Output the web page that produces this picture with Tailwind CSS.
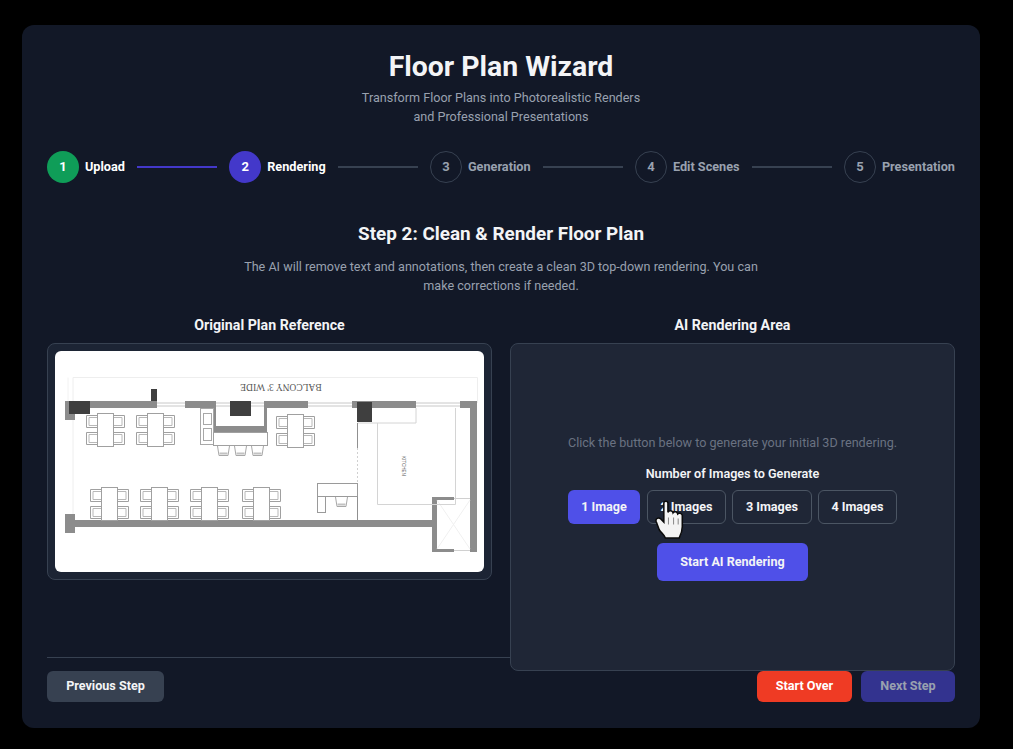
<!DOCTYPE html>
<html lang="en">

<head>
    <meta charset="UTF-8">
    <meta name="viewport" content="width=device-width, initial-scale=1.0">
    <title>Floor Plan Wizard</title>
    <script src="https://cdn.jsdelivr.net/npm/@tailwindcss/browser@4"></script>
</head>

<body class="bg-black font-['Roboto',sans-serif]">
    <div class="h-[749px] w-[1013px] pt-[25px] pl-[22px]">
        <div class="h-[703px] w-[958px] rounded-xl bg-[#121827] px-[25px] pt-6">

            <!-- header -->
            <div class="text-center">
                <h1 class="text-[28.4px] leading-9 font-bold text-gray-100">Floor Plan Wizard</h1>
                <p class="mt-[3px] text-[12.6px] leading-[19px] text-gray-400">Transform Floor Plans into Photorealistic Renders<br>and Professional Presentations</p>
            </div>

            <!-- stepper -->
            <div class="mt-[25px] flex items-center justify-between">
                <div class="flex items-center gap-[6px]">
                    <div class="flex h-8 w-8 items-center justify-center rounded-full bg-[#0f9d58] text-[13px] font-bold text-white">1</div>
                    <span class="text-[12.7px] font-bold text-white">Upload</span>
                </div>
                <div class="h-[2px] w-20 bg-[#4338ca]"></div>
                <div class="flex items-center gap-[6px]">
                    <div class="flex h-8 w-8 items-center justify-center rounded-full bg-[#4338ca] text-[13px] font-bold text-white">2</div>
                    <span class="text-[12.7px] font-bold text-white">Rendering</span>
                </div>
                <div class="h-[2px] w-20 bg-[#374151]"></div>
                <div class="flex items-center gap-[6px]">
                    <div class="flex h-8 w-8 items-center justify-center rounded-full border border-[#374151] text-[13px] font-bold text-gray-400">3</div>
                    <span class="text-[12.7px] font-bold text-gray-400">Generation</span>
                </div>
                <div class="h-[2px] w-20 bg-[#374151]"></div>
                <div class="flex items-center gap-[6px]">
                    <div class="flex h-8 w-8 items-center justify-center rounded-full border border-[#374151] text-[13px] font-bold text-gray-400">4</div>
                    <span class="text-[12.7px] font-bold text-gray-400">Edit Scenes</span>
                </div>
                <div class="h-[2px] w-20 bg-[#374151]"></div>
                <div class="flex items-center gap-[6px]">
                    <div class="flex h-8 w-8 items-center justify-center rounded-full border border-[#374151] text-[13px] font-bold text-gray-400">5</div>
                    <span class="text-[12.7px] font-bold text-gray-400">Presentation</span>
                </div>
            </div>

            <!-- step heading -->
            <div class="mt-[37px] text-center">
                <h2 class="text-[18.9px] leading-7 font-bold text-gray-100">Step 2: Clean &amp; Render Floor Plan</h2>
                <p class="mx-auto mt-[9px] w-[530px] text-[12.6px] leading-[19px] text-gray-400">The AI will remove text and annotations, then create a clean 3D top-down rendering. You can make corrections if needed.</p>
            </div>

            <!-- panels -->
            <div class="mt-5 grid h-[342px] grid-cols-2 gap-[18px]">
                <div>
                    <h3 class="mb-2 text-center text-[14.2px] leading-5 font-bold text-gray-100">Original Plan Reference</h3>
                    <div class="rounded-lg border border-[#374151] bg-[#1c2434] p-[7px]">
                        <svg class="block h-[221px] w-[429px] rounded-md bg-white" viewBox="0 0 429 221" fill="none">
                            <defs>
                                <g id="chair" stroke="#a0a0a0" stroke-width="1">
                                    <path d="M11 .5H.5v12H11" />
                                    <path d="M11 2.5H3v8h8" stroke="#b8b8b8" />
                                </g>
                                <g id="set">
                                    <use href="#chair" transform="translate(-11 2)" />
                                    <use href="#chair" transform="translate(-11 19)" />
                                    <use href="#chair" transform="translate(28 2) scale(-1 1)" />
                                    <use href="#chair" transform="translate(28 19) scale(-1 1)" />
                                    <rect x=".5" y=".5" width="16" height="33" fill="#fff" stroke="#a0a0a0" />
                                </g>
                                <g id="stool" stroke="#a8a8a8">
                                    <path d="M.5 0l1.5 9.5h9L12.5 0" />
                                    <path d="M2.5 7.5h8" stroke="#c2c2c2" stroke-width="2" />
                                </g>
                            </defs>

                            <!-- balcony outline -->
                            <path d="M18 163V26.5H422.5V52" stroke="#eeeeee" />
                            <path d="M13 26.5V50" stroke="#f2f2f2" />
                            <text x="226" y="39" transform="rotate(180 226 36)" text-anchor="middle" font-family="'Liberation Serif',serif" font-size="9.5" fill="#555">BALCONY 3' WIDE</text>

                            <!-- windows -->
                            <path d="M102 52h28M102 55h28M161 52h14M161 55h14M196 52h13M196 55h13M253 52h44M253 55h44M361 52h44M361 55h44" stroke="#c8c8c8" />

                            <!-- walls -->
                            <path d="M10 50h92v7H20v12H10zM130 50h31v25h48V50h44v7h-41v24h-54V57h-28zM297 50h64v7h-64zM405 50h17v151h-7V57h-10zM10 163h10v6h357V146h22v3h-17v49h17v3h-22v-25H20v6H10z" fill="#8c8c8c" />
                            <path d="M399 147.5h16M399 199.5h16" stroke="#d0d0d0" />
                            <path d="M382 149L415 198M415 149L382 198" stroke="#f0f0f0" />

                            <!-- dark columns -->
                            <rect x="96" y="38" width="6" height="12" fill="#3f3f3f" />
                            <rect x="14" y="50" width="21" height="13" fill="#3f3f3f" />
                            <rect x="175" y="50" width="21" height="15" fill="#3f3f3f" />
                            <rect x="302" y="51" width="15" height="20" fill="#3f3f3f" />

                            <!-- upper tables -->
                            <use href="#set" x="42" y="62" />
                            <use href="#set" x="92" y="62" />
                            <use href="#set" x="232" y="63" />

                            <!-- bar counter -->
                            <rect x="145.5" y="57.5" width="13" height="36" stroke="#a8a8a8" />
                            <rect x="148.5" y="62.5" width="8" height="11" stroke="#a8a8a8" />
                            <rect x="148.5" y="77.5" width="8" height="12" stroke="#a8a8a8" />
                            <rect x="158.5" y="81.5" width="54" height="13" fill="#fff" stroke="#a0a0a0" />
                            <use href="#stool" x="162" y="95" />
                            <use href="#stool" x="179" y="95" />
                            <use href="#stool" x="196" y="95" />

                            <!-- kitchen -->
                            <path d="M302.5 72H361V57M322.5 72V153.5H400.5V57" stroke="#d4d4d4" />
                            <path d="M302.5 72V97" stroke="#909090" />
                            <path d="M302.5 97V132" stroke="#d0d0d0" stroke-dasharray="2 2" />
                            <text x="348" y="115" transform="rotate(90 348 115)" text-anchor="middle" dominant-baseline="middle" font-family="'Liberation Sans',sans-serif" font-size="4.5" fill="#555">KITCHEN</text>

                            <!-- lower tables -->
                            <use href="#set" x="46" y="136" />
                            <use href="#set" x="96" y="136" />
                            <use href="#set" x="146" y="136" />
                            <use href="#set" x="198" y="136" />

                            <!-- desk -->
                            <rect x="262.5" y="132.5" width="40" height="13" stroke="#9a9a9a" />
                            <rect x="262.5" y="145.5" width="8" height="16" stroke="#9a9a9a" />
                            <path d="M302.5 145.5V169" stroke="#909090" />
                            <use href="#stool" x="280" y="146" />
                        </svg>
                    </div>
                </div>

                <div>
                    <h3 class="mb-2 text-center text-[14.2px] leading-5 font-bold text-gray-100">AI Rendering Area</h3>
                    <div class="relative z-10 flex h-[328px] flex-col items-center rounded-lg border border-[#374151] bg-[#1f2636] pt-[89px]">
                        <p class="text-[12.6px] leading-[19px] text-gray-500">Click the button below to generate your initial 3D rendering.</p>
                        <p class="mt-3 text-[12.6px] leading-[19px] font-semibold text-gray-100">Number of Images to Generate</p>
                        <div class="mt-[7px] flex gap-[6px]">
                            <button class="mr-px h-[34px] w-[72px] rounded-md bg-[#4f50e8] text-[12.6px] font-bold text-gray-100">1 Image</button>
                            <button class="relative h-[34px] w-[79px] rounded-md border border-[#4b5563] text-[12.6px] font-bold text-gray-100">2 Images
                                <svg class="absolute top-[9px] left-[7px] h-[41px] w-[31px]" viewBox="0 0 30 40">
                                    <path d="M8.5 3C8.5 .5 12.5 .5 12.5 3V12c1-2 4.5-2 5 .5 1-1.5 4-1.5 4.5 1 1-1 4-1 4.5 1.5V26c0 5-1.5 8-3 11H10c-1-3-4-5-6-8L1 21c-1-3 2.5-4.5 4.5-2.5l3 3z" fill="#f4f4f4" stroke="#0b0b0b" stroke-width="1.5" />
                                    <path d="M13 17v7M18 17v7M22.5 18v6" stroke="#8a8a8a" />
                                </svg>
                            </button>
                            <button class="h-[34px] w-20 rounded-md border border-[#4b5563] text-[12.6px] font-bold text-gray-100">3 Images</button>
                            <button class="h-[34px] w-[79px] rounded-md border border-[#4b5563] text-[12.6px] font-bold text-gray-100">4 Images</button>
                        </div>
                        <button class="mt-[19px] h-[38px] w-[151px] rounded-md bg-[#4f50e8] text-[12.6px] font-bold text-gray-100">Start AI Rendering</button>
                    </div>
                </div>
            </div>

            <!-- footer -->
            <div class="flex items-start justify-between border-t border-[#374151] pt-[13px]">
                <button class="h-[31px] w-[117px] rounded-md bg-[#374151] text-[12.6px] font-bold text-gray-100">Previous Step</button>
                <div class="flex gap-[9px]">
                    <button class="h-[31px] w-[95px] rounded-md bg-[#ef3b24] text-[12.6px] font-bold text-white">Start Over</button>
                    <button class="h-[31px] w-[94px] rounded-md bg-[#33338f] text-[12.6px] font-bold text-gray-400">Next Step</button>
                </div>
            </div>
        </div>
    </div>
</body>

</html>
